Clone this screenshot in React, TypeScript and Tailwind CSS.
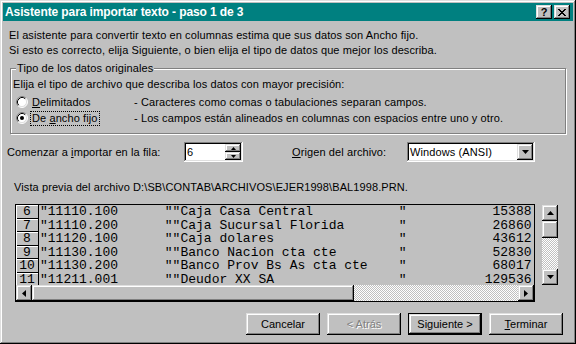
import React from "react";

const sans = "font-['Liberation_Sans',Arial,sans-serif]";
const raised =
  "shadow-[inset_-1px_-1px_#000,inset_1px_1px_#dfdfdf,inset_-2px_-2px_#808080,inset_2px_2px_#fff]";
const sunken =
  "shadow-[inset_-1px_-1px_#fff,inset_1px_1px_#808080,inset_-2px_-2px_#dfdfdf,inset_2px_2px_#000]";
const dither =
  "bg-[repeating-conic-gradient(#c0c0c0_0%_25%,#fff_0%_50%)] bg-[length:2px_2px]";

const rows: [number, string, string, string][] = [
  [6, "11110.100", "Caja Casa Central", "15388"],
  [7, "11110.200", "Caja Sucursal Florida", "26860"],
  [8, "11120.100", "Caja dolares", "43612"],
  [9, "11130.100", "Banco Nacion cta cte", "52830"],
  [10, "11130.200", "Banco Prov Bs As cta cte", "68017"],
  [11, "11211.001", "Deudor XX SA", "129536"],
];

const buildLine = (code: string, name: string, amount: string) => {
  const head = (`"${code}`.padEnd(16) + `""${name}`).padEnd(46) + `"`;
  return head + amount.padStart(16);
};

type Dir = "up" | "down" | "left" | "right";

const Arrow = ({ dir, size = 7 }: { dir: Dir; size?: number }) => {
  const h = Math.ceil(size / 2);
  const pts: Record<Dir, string> = {
    up: `0,${h} ${size / 2},0 ${size},${h}`,
    down: `0,0 ${size / 2},${h} ${size},0`,
    left: `${h},0 0,${size / 2} ${h},${size}`,
    right: `0,0 ${h},${size / 2} 0,${size}`,
  };
  const vertical = dir === "up" || dir === "down";
  return (
    <svg
      width={vertical ? size : h}
      height={vertical ? h : size}
      viewBox={`0 0 ${vertical ? size : h} ${vertical ? h : size}`}
    >
      <polygon points={pts[dir]} fill="#000" />
    </svg>
  );
};

const Radio = ({ checked }: { checked?: boolean }) => (
  <svg width="12" height="12" viewBox="0 0 12 12" className="shrink-0">
    <circle cx="6" cy="6" r="5" fill="#fff" />
    <path d="M2.11 9.89A5.5 5.5 0 0 1 9.89 2.11" stroke="#808080" fill="none" />
    <path d="M9.89 2.11A5.5 5.5 0 0 1 2.11 9.89" stroke="#fff" fill="none" />
    <path d="M2.82 9.18A4.5 4.5 0 0 1 9.18 2.82" stroke="#000" fill="none" />
    <path d="M9.18 2.82A4.5 4.5 0 0 1 2.82 9.18" stroke="#dfdfdf" fill="none" />
    {checked && <circle cx="6" cy="6" r="2" fill="#000" />}
  </svg>
);

const ScrollBtn = ({ dir }: { dir: Dir }) => (
  <div className={`w-[16px] h-[16px] bg-[#c0c0c0] flex items-center justify-center shrink-0 ${raised}`}>
    <Arrow dir={dir} />
  </div>
);

const DlgButton = ({
  children,
  disabled,
  isDefault,
}: {
  children: React.ReactNode;
  disabled?: boolean;
  isDefault?: boolean;
}) => (
  <div
    className={`w-[74px] h-[22px] flex items-center justify-center text-[11px] ${
      isDefault ? "border border-black" : ""
    } ${disabled ? "text-[#808080] [text-shadow:1px_1px_#fff]" : "text-black"}`}
  >
    <div className={`w-full h-full flex items-center justify-center ${raised}`}>{children}</div>
  </div>
);

export default function App() {
  return (
    <div className={`w-[576px] h-[344px] bg-[#c0c0c0] relative ${sans} text-black select-none`}>
      <div className="absolute inset-0 pointer-events-none shadow-[inset_-1px_-1px_#000,inset_1px_1px_#dfdfdf,inset_-2px_-2px_#808080,inset_2px_2px_#fff]" />
      {/* title bar */}
      <div className="mx-[3px] pt-[3px]">
        <div className="h-[18px] bg-[#008080] flex items-center pl-[2px] pr-[3px]">
          <span className="text-white font-bold text-[12px] leading-none tracking-[-0.1px]">
            Asistente para importar texto - paso 1 de 3
          </span>
          <div className="ml-auto flex gap-[2px]">
            <div className={`w-[16px] h-[14px] bg-[#c0c0c0] flex items-center justify-center text-[11px] font-bold leading-none ${raised}`}>
              ?
            </div>
            <div className={`w-[16px] h-[14px] bg-[#c0c0c0] flex items-center justify-center ${raised}`}>
              <svg width="8" height="7" viewBox="0 0 8 7">
                <path d="M0 0h2v1h1v1h2V1h1V0h2v1H7v1H6v1H5v1h1v1h1v1h1v1H6V6H5V5H3v1H2v1H0V6h1V5h1V4h1V3H2V2H1V1H0z" fill="#000" />
              </svg>
            </div>
          </div>
        </div>
      </div>

      <div className="px-[8px] text-[11px] tracking-[0.1px]">
        <div className="mt-[7px] ml-[1px] leading-[15px]">
          <p>El asistente para convertir texto en columnas estima que sus datos son Ancho fijo.</p>
          <p>Si esto es correcto, elija Siguiente, o bien elija el tipo de datos que mejor los describa.</p>
        </div>

        {/* group box */}
        <div className="relative mt-[10px] mx-[2px] h-[66px] border border-[#808080] shadow-[inset_1px_1px_#fff,1px_1px_#fff]">
          <span className="absolute left-[5px] -top-[8px] bg-[#c0c0c0] px-[1px] leading-[15px]">
            Tipo de los datos originales
          </span>
          <div className="pt-[8px] pl-[2px] leading-[15px]">
            <p>Elija el tipo de archivo que describa los datos con mayor precisión:</p>
            <div className="mt-[2px] pl-[3px]">
              <div className="h-[16px] flex items-center">
                <Radio />
                <span className="ml-[4px] w-[102px]">
                  <u>D</u>elimitados
                </span>
                <span>- Caracteres como comas o tabulaciones separan campos.</span>
              </div>
              <div className="h-[16px] flex items-center">
                <Radio checked />
                <span className="ml-[3px] w-[103px]">
                  <span className="outline-1 outline-dotted outline-black px-[1px] leading-[13px] inline-block">
                    De <u>a</u>ncho fijo
                  </span>
                </span>
                <span>- Los campos están alineados en columnas con espacios entre uno y otro.</span>
              </div>
            </div>
          </div>
        </div>

        {/* start row / origin */}
        <div className="mt-[8px] h-[20px] flex items-center">
          <span className="w-[177px] -ml-[1px]">
            Comenzar a <u>i</u>mportar en la fila:
          </span>
          <div className={`w-[59px] h-[20px] bg-white flex items-center ${sunken}`}>
            <span className="pl-[3px] flex-1">6</span>
            <div className="flex flex-col mr-[2px]">
              <div className={`w-[16px] h-[8px] bg-[#c0c0c0] flex items-center justify-center ${raised}`}>
                <Arrow dir="up" size={5} />
              </div>
              <div className={`w-[16px] h-[8px] bg-[#c0c0c0] flex items-center justify-center ${raised}`}>
                <Arrow dir="down" size={5} />
              </div>
            </div>
          </div>
          <span className="ml-[49px] w-[115px]">
            <u>O</u>rigen del archivo:
          </span>
          <div className={`w-[128px] h-[20px] bg-white flex items-center ${sunken}`}>
            <span className="pl-[3px] flex-1">Windows (ANSI)</span>
            <div className={`w-[16px] h-[16px] mr-[2px] bg-[#c0c0c0] flex items-center justify-center ${raised}`}>
              <Arrow dir="down" />
            </div>
          </div>
        </div>

        <p className="mt-[18px] ml-[6px] leading-[15px]">
          Vista previa del archivo D:\SB\CONTAB\ARCHIVOS\EJER1998\BAL1998.PRN.
        </p>

        {/* preview */}
        <div className="mt-[9px] flex items-start tracking-normal">
          <div className="ml-[7px] w-[520px] h-[98px] border border-black flex flex-col">
            <div className="h-[80px] overflow-hidden font-['Liberation_Mono','Courier_New',monospace] text-[13px]">
              {rows.map(([n, code, name, amount]) => (
                <div key={n} className="h-[13.6px] flex leading-[14px]">
                  <div className="w-[23px] h-full shrink-0 border-r border-black shadow-[inset_1px_1px_#fff,inset_0_-1px_#000] text-center">
                    {n}
                  </div>
                  <div className="pl-[1px] whitespace-pre">{buildLine(code, name, amount)}</div>
                </div>
              ))}
            </div>
            <div className="h-[16px] flex">
              <ScrollBtn dir="left" />
              <div className={`w-[322px] h-full bg-[#c0c0c0] ${raised}`} />
              <div className={`flex-1 h-full ${dither}`} />
              <ScrollBtn dir="right" />
            </div>
          </div>
          <div className="ml-[7px] mt-[1px] w-[16px] h-[80px] flex flex-col">
            <ScrollBtn dir="up" />
            <div className={`h-[17px] bg-[#c0c0c0] ${raised}`} />
            <div className={`flex-1 ${dither}`} />
            <ScrollBtn dir="down" />
          </div>
        </div>

        {/* buttons */}
        <div className="mt-[11px] flex justify-end gap-[7px] mr-[5px] tracking-normal">
          <DlgButton>Cancelar</DlgButton>
          <DlgButton disabled>&lt; Atrás</DlgButton>
          <DlgButton isDefault>Siguiente &gt;</DlgButton>
          <DlgButton>
            <span>
              <u>T</u>erminar
            </span>
          </DlgButton>
        </div>
      </div>
    </div>
  );
}
